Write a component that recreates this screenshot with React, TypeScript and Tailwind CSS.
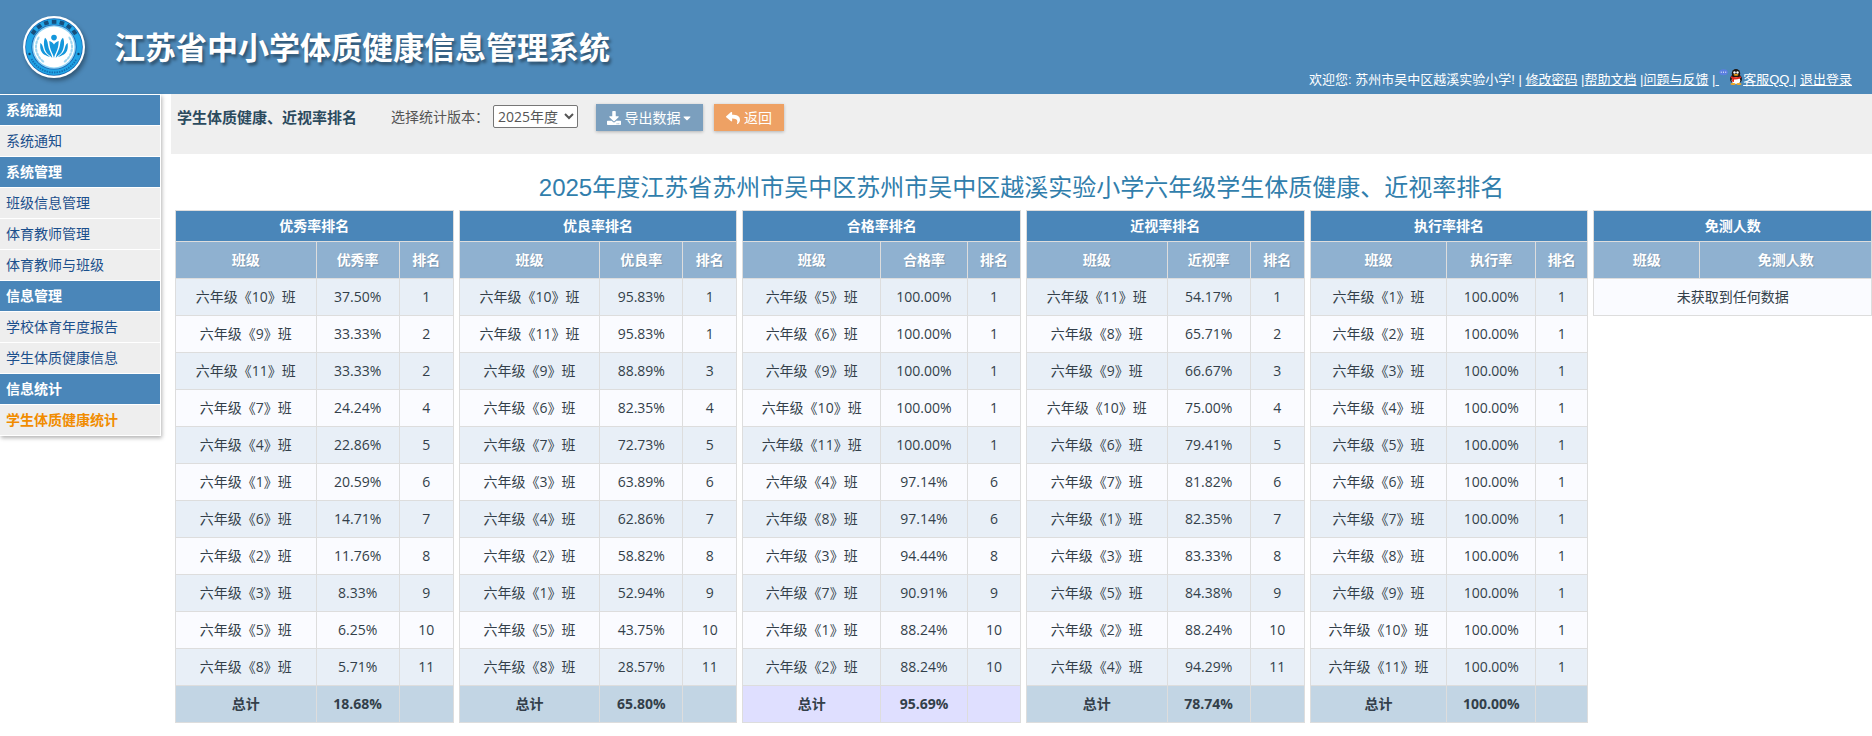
import React from "react";
import { FaDownload, FaReply, FaCaretDown } from "react-icons/fa";

type Row = [string, string, string];
type Board = {
  title: string;
  rate: string;
  rows: Row[];
  total?: string;
  highlight?: boolean;
  cols: string[];
};

const build = (spec: string): Row[] =>
  spec.split(" ").map((item) => {
    const [cls, rate, rank] = item.split("/");
    return [`六年级《${cls}》班`, `${rate}%`, rank];
  });

const boards: Board[] = [
  {
    title: "优秀率排名",
    rate: "优秀率",
    cols: ["w-auto", "w-[83px]", "w-[54px]"],
    rows: build(
      "10/37.50/1 9/33.33/2 11/33.33/2 7/24.24/4 4/22.86/5 1/20.59/6 6/14.71/7 2/11.76/8 3/8.33/9 5/6.25/10 8/5.71/11",
    ),
    total: "18.68%",
  },
  {
    title: "优良率排名",
    rate: "优良率",
    cols: ["w-auto", "w-[83px]", "w-[54px]"],
    rows: build(
      "10/95.83/1 11/95.83/1 9/88.89/3 6/82.35/4 7/72.73/5 3/63.89/6 4/62.86/7 2/58.82/8 1/52.94/9 5/43.75/10 8/28.57/11",
    ),
    total: "65.80%",
  },
  {
    title: "合格率排名",
    rate: "合格率",
    cols: ["w-auto", "w-[87px]", "w-[53px]"],
    rows: build(
      "5/100.00/1 6/100.00/1 9/100.00/1 10/100.00/1 11/100.00/1 4/97.14/6 8/97.14/6 3/94.44/8 7/90.91/9 1/88.24/10 2/88.24/10",
    ),
    total: "95.69%",
    highlight: true,
  },
  {
    title: "近视率排名",
    rate: "近视率",
    cols: ["w-auto", "w-[83px]", "w-[54px]"],
    rows: build(
      "11/54.17/1 8/65.71/2 9/66.67/3 10/75.00/4 6/79.41/5 7/81.82/6 1/82.35/7 3/83.33/8 5/84.38/9 2/88.24/10 4/94.29/11",
    ),
    total: "78.74%",
  },
  {
    title: "执行率排名",
    rate: "执行率",
    cols: ["w-auto", "w-[89px]", "w-[52px]"],
    rows: build(
      "1/100.00/1 2/100.00/1 3/100.00/1 4/100.00/1 5/100.00/1 6/100.00/1 7/100.00/1 8/100.00/1 9/100.00/1 10/100.00/1 11/100.00/1",
    ),
    total: "100.00%",
  },
  { title: "免测人数", rate: "免测人数", cols: ["w-[106px]", "w-auto"], rows: [] },
];

const menu = [
  { title: "系统通知", items: ["系统通知"] },
  { title: "系统管理", items: ["班级信息管理", "体育教师管理", "体育教师与班级"] },
  { title: "信息管理", items: ["学校体育年度报告", "学生体质健康信息"] },
  { title: "信息统计", items: ["学生体质健康统计"] },
];
const activeItem = "学生体质健康统计";

function Emblem() {
  const marks = [-54, -36, -18, 0, 18, 36, 54];
  const leaves = [0, 1, 2, 3, 4, 5, 6];
  return (
    <svg viewBox="0 0 64 64" className="size-16 shrink-0 drop-shadow-[2px_3px_2px_rgba(0,0,0,0.35)]" aria-hidden="true">
      <circle cx="32" cy="32" r="31" fill="#fff" />
      <circle cx="32" cy="32" r="28.8" fill="#1668b4" />
      <circle cx="32" cy="32" r="28" fill="#22a5e6" />
      <circle cx="32" cy="32" r="22.6" fill="#1a62b0" />
      <circle cx="32" cy="32" r="21.8" fill="#8fd4f5" />
      <circle cx="32" cy="32" r="20.4" fill="#fff" />
      {marks.map((a) => (
        <rect key={a} x="29.8" y="4.8" width="4.6" height="4" fill="#174e7c" transform={`rotate(${a} 32 32)`} />
      ))}
      <path d="M9.500 44 A25.500 25.500 0 0 0 54.500 44" fill="none" stroke="#1470b5" strokeWidth="1.8" strokeDasharray="1.5 1" />
      <circle cx="7.5" cy="39" r="1.2" fill="#123f66" />
      <circle cx="56.5" cy="39" r="1.2" fill="#123f66" />
      {leaves.map((i) => (
        <g key={i} fill="#9fd6f0">
          <ellipse cx="14" cy="32" rx="1.1" ry="2.2" transform={`rotate(${28 - i * 13} 32 32)`} />
          <ellipse cx="50" cy="32" rx="1.1" ry="2.2" transform={`rotate(${i * 13 - 28} 32 32)`} />
        </g>
      ))}
      <g fill="#1497dc">
        <circle cx="32" cy="22.600" r="2.800" />
        <path d="M32 43 C31 38 27.500 35.500 27.300 26 C29 26.500 31 27.500 32 29.500 C33 27.500 35 26.500 36.700 26 C36.500 35.500 33 38 32 43Z" />
        <path d="M30.300 43 C29.800 38.500 26.500 35 26 30 C25.600 26 24.500 24 23 22.800 C21 27 22 34 24.500 37.500 C26.500 40.300 29 41 30.300 43Z" />
        <path d="M33.700 43 C34.200 38.500 37.500 35 38 30 C38.400 26 39.500 24 41 22.800 C43 27 42 34 39.500 37.500 C37.500 40.300 35 41 33.700 43Z" />
        <path d="M28 42 C24 40.500 20.500 39.500 18.900 35.500 C17.800 32.500 18.300 30 18.300 28 C20.300 29 20.800 31.500 21.500 34 C22.500 38 25.500 39.500 28 42Z" />
        <path d="M36 42 C40 40.500 43.500 39.500 45.100 35.500 C46.200 32.500 45.700 30 45.700 28 C43.700 29 43.200 31.500 42.500 34 C41.500 38 38.500 39.500 36 42Z" />
      </g>
    </svg>
  );
}

function Penguin() {
  return (
    <svg viewBox="0 0 24 16" className="inline-block h-4 w-6 align-[-1px]" aria-hidden="true">
      <ellipse cx="4.500" cy="3.200" rx="4.300" ry="3" fill="#5b7fe0" />
      <path d="M1.800 3.200h1M4 3.200h1M6.200 3.200h1" stroke="#fff" strokeWidth="1" />
      <g transform="translate(2 0)">
        <ellipse cx="15" cy="10" rx="6" ry="5" fill="#1b1512" />
        <ellipse cx="15" cy="4.500" rx="4.200" ry="4.500" fill="#1b1512" />
        <ellipse cx="15" cy="11.500" rx="4.300" ry="3.600" fill="#fff" />
        <ellipse cx="13.500" cy="3.500" rx="1.200" ry="1.300" fill="#fff" />
        <ellipse cx="16.500" cy="3.500" rx="1.200" ry="1.300" fill="#fff" />
        <ellipse cx="15" cy="5.800" rx="2.500" ry="0.900" fill="#f6a81c" />
        <path d="M10 7.200 Q15 9.500 20 7.200 L20 9 Q15 11 13 10.500 L13 13 L11 12.500 L11.200 9.800 L10 9Z" fill="#e0281c" />
        <ellipse cx="12" cy="15" rx="2.600" ry="1" fill="#f6a81c" />
        <ellipse cx="18" cy="15" rx="2.600" ry="1" fill="#f6a81c" />
      </g>
    </svg>
  );
}

function RankTable({ board }: { board: Board }) {
  const heads = board.total ? ["班级", board.rate, "排名"] : ["班级", board.rate];
  const cell = "border border-[#ddd] p-0 text-center";
  return (
    <table className="w-full table-fixed border-collapse self-start text-sm text-[#333f4a]">
      <colgroup>
        {board.cols.map((c, i) => (
          <col key={i} className={c} />
        ))}
      </colgroup>
      <thead className="text-white">
        <tr className="h-[31px] bg-[#4a86b9]">
          <th colSpan={heads.length} className={cell}>
            {board.title}
          </th>
        </tr>
        <tr className="h-[37px] bg-[#8fb1d0]">
          {heads.map((h) => (
            <th key={h} className={`${cell} [text-shadow:1px_1px_1px_rgba(0,0,0,0.15)]`}>
              {h}
            </th>
          ))}
        </tr>
      </thead>
      <tbody>
        {board.rows.map((row, i) => (
          <tr key={i} className={`h-[37px] ${i % 2 ? "bg-[#fafbff]" : "bg-[#e8eff7]"}`}>
            {row.map((value, j) => (
              <td key={j} className={cell}>
                {value}
              </td>
            ))}
          </tr>
        ))}
        {board.total ? (
          <tr className={`h-[37px] font-bold ${board.highlight ? "bg-[#dfdfff]" : "bg-[#c2d5e4]"}`}>
            <td className={cell}>总计</td>
            <td className={cell}>{board.total}</td>
            <td className={cell}></td>
          </tr>
        ) : (
          <tr className="h-[37px] bg-[#fafbff]">
            <td colSpan={2} className={cell}>
              未获取到任何数据
            </td>
          </tr>
        )}
      </tbody>
    </table>
  );
}

export default function App() {
  return (
    <div className="min-h-screen bg-white font-['Open_Sans','Noto_Sans_CJK_SC',sans-serif] text-sm">
      <header className="flex h-[94px] items-start justify-between bg-[#4d89b9] text-white">
        <div className="flex items-center gap-7 pt-[15px] pl-[22px]">
          <Emblem />
          <h1 className="text-[31px] leading-none font-bold whitespace-nowrap [text-shadow:2px_3px_3px_rgba(0,0,0,0.4)]">
            江苏省中小学体质健康信息管理系统
          </h1>
        </div>
        <nav className="self-end pr-5 pb-1 font-['Liberation_Sans','Noto_Sans_CJK_SC',sans-serif] text-[13px] leading-5 whitespace-nowrap">
          欢迎您: 苏州市吴中区越溪实验小学! |{" "}
          <a href="#password" className="underline">修改密码</a> |
          <a href="#help" className="underline">帮助文档</a> |
          <a href="#feedback" className="underline">问题与反馈</a> |
          <a href="#qq" className="underline">
            {" "}
            <Penguin />
            客服QQ{" "}
          </a>
          | <a href="#logout" className="underline">退出登录</a>
        </nav>
      </header>

      <div className="flex items-start gap-2.5">
        <aside className="w-[161px] shrink-0 border-r border-white pt-px shadow-[1px_2px_4px_rgba(0,0,0,0.3)]">
          {menu.map((group) => (
            <section key={group.title}>
              <h2 className="h-[31px] border-b border-white bg-[#4a86b9] pl-1.5 leading-[30px] font-bold text-white">
                {group.title}
              </h2>
              <ul>
                {group.items.map((item) => (
                  <li key={item} className="h-[31px] border-b border-white bg-[#eee] pl-1.5 leading-[30px]">
                    <a
                      href="#menu"
                      className={item === activeItem ? "font-bold text-[#f18c00]" : "text-[#1b4f8c]"}
                    >
                      {item}
                    </a>
                  </li>
                ))}
              </ul>
            </section>
          ))}
        </aside>

        <main className="min-w-0 flex-1">
          <div className="flex h-[60px] items-start bg-[#efefef] pt-2.5 pl-1.5">
            <h2 className="text-[15px] leading-[26px] font-bold text-[#2b4a5e]">学生体质健康、近视率排名</h2>
            <label htmlFor="version" className="ml-[34px] leading-[26px] text-[#555]">
              选择统计版本：
            </label>
            <select
              id="version"
              defaultValue="2025"
              className="mt-px ml-1 h-[23px] w-[85px] rounded-[2px] border border-[#767676] bg-white text-[#555]"
            >
              <option value="2025">2025年度</option>
            </select>
            <button
              type="button"
              className="ml-[18px] flex h-[27px] w-[107px] items-center justify-center bg-[#7b9fbe] leading-[26px] text-white shadow-[0_1px_3px_rgba(0,0,0,0.25)]"
            >
              <FaDownload className="mr-1 size-3.5" />
              导出数据
              <FaCaretDown className="size-3" />
            </button>
            <button
              type="button"
              className="ml-[11px] flex h-[27px] w-[70px] items-center justify-center gap-1 bg-[#eea164] leading-[26px] text-white shadow-[0_1px_3px_rgba(0,0,0,0.25)]"
            >
              <FaReply className="size-3.5" />
              返回
            </button>
          </div>

          <h2 className="mt-[18px] mb-1.5 text-center font-['Liberation_Sans','Noto_Sans_CJK_SC',sans-serif] text-2xl leading-8 font-normal text-[#317eac]">
            2025年度江苏省苏州市吴中区苏州市吴中区越溪实验小学六年级学生体质健康、近视率排名
          </h2>

          <div className="grid grid-cols-6 gap-[5px] pl-1">
            {boards.map((board) => (
              <RankTable key={board.title} board={board} />
            ))}
          </div>
        </main>
      </div>
    </div>
  );
}
